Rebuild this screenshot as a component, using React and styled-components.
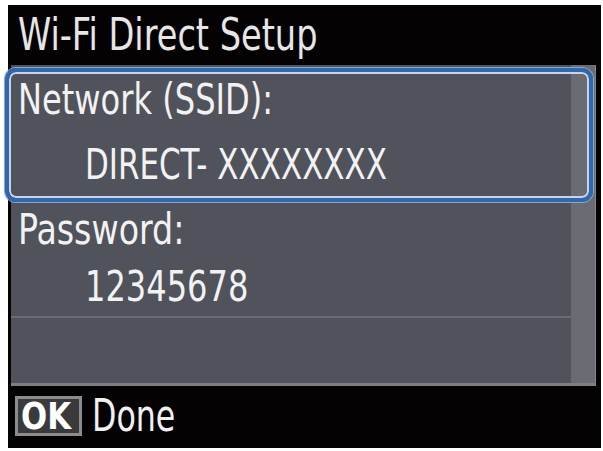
import React from "react";
import styled, { createGlobalStyle } from "styled-components";

const Global = createGlobalStyle`
  html, body {
    margin: 0;
    background: #ffffff;
  }
  body {
    font-family: "DejaVu Sans Condensed", "DejaVu Sans", sans-serif;
    font-stretch: condensed;
  }
`;

// the LCD font is narrower than anything installed: squeeze the glyphs
const Txt = styled.span`
  display: inline-block;
  white-space: nowrap;
  transform: scaleX(${(p) => p.$sx || 0.83});
  transform-origin: left center;
`;

const Screen = styled.div`
  margin: 5px 0 0 8px;
  width: 593px;
  height: 443px;
  background: #040203;
  display: flex;
  flex-direction: column;
  color: #ececec;
`;

const Title = styled.div`
  height: 60px;
  line-height: 60px;
  padding-left: 10px;
  font-size: 45px;
  color: #e6e6e6;
`;

const Panel = styled.div`
  margin-left: 3px;
  width: 585px;
  height: 318px;
  display: flex;
  background: #50535b;
  border-bottom: 3px solid #7e7f85;
`;

const List = styled.div`
  flex: 1;
  display: flex;
  flex-direction: column;
`;

const Scroll = styled.div`
  width: 24px;
  background: #6b6c73;
  border-right: 1px solid #85868b;
`;

const Item = styled.div`
  position: relative;
  z-index: 1;
  font-size: 43px;
  color: #f2f2f2;
  ${(p) =>
    p.$selected
      ? `
    margin: 3px -22px 0 -6px;
    border: 4px solid #2d69ae;
    border-radius: 11px;
    box-shadow: inset 0 0 0 2px #cbd3e2, 0 0 0 1px #8fa6c6;
    padding: 0 0 4px 9px;
  `
      : `
    padding-left: 7px;
    border-bottom: 2px solid #6a6d74;
  `}
`;

const Label = styled.div`
  line-height: 54px;
  height: 54px;
`;

const Value = styled.div`
  line-height: 60px;
  height: 60px;
  padding-left: 67px;
  margin-top: ${(p) => (p.$gap ? p.$gap : 0)}px;
`;

const Empty = styled.div`
  flex: 1;
`;

const Footer = styled.div`
  flex: 1;
  display: flex;
  align-items: center;
  padding-left: 7px;
  gap: 10px;
`;

const OkKey = styled.div`
  width: 61px;
  height: 34px;
  border: 3px solid #8c8c8c;
  background: #3a3a3c;
  color: #ffffff;
  font-weight: bold;
  font-size: 38px;
  line-height: 34px;
  text-align: center;
  margin-top: -3px;
`;

const Done = styled.div`
  font-size: 44px;
  color: #f0f0f0;
  margin-top: -3px;
`;

export default function App() {
  return (
    <>
      <Global />
      <Screen>
        <Title>
          <Txt>Wi-Fi Direct Setup</Txt>
        </Title>
        <Panel>
          <List>
            <Item $selected>
              <Label>
                <Txt>Network (SSID):</Txt>
              </Label>
              <Value $gap={8}>
                <Txt $sx={0.8}>DIRECT- XXXXXXXX</Txt>
              </Value>
            </Item>
            <Item>
              <Label>
                <Txt $sx={0.86}>Password:</Txt>
              </Label>
              <Value>
                <Txt>12345678</Txt>
              </Value>
            </Item>
            <Empty />
          </List>
          <Scroll />
        </Panel>
        <Footer>
          <OkKey>
            <Txt $sx={0.9}>OK</Txt>
          </OkKey>
          <Done>
            <Txt $sx={0.8}>Done</Txt>
          </Done>
        </Footer>
      </Screen>
    </>
  );
}
